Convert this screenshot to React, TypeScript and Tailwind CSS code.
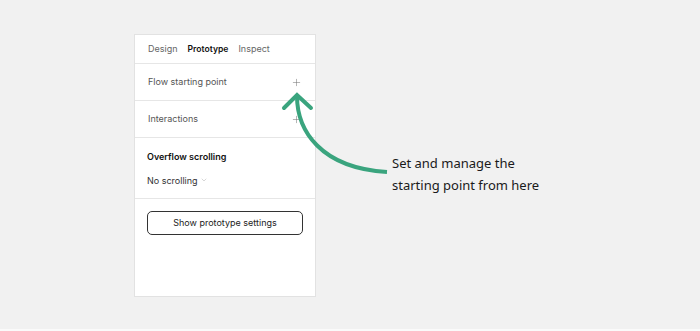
import { Plus, ChevronDown } from 'lucide-react';

const font = { fontFamily: 'Inter, "Noto Sans", sans-serif' };

function Row({ label }: { label: string }) {
  return (
    <div className="flex h-[37px] items-center justify-between border-b border-[#e6e6e6] pl-[13px] pr-[13px]">
      <span className="text-[9px] text-[#555]">{label}</span>
      <Plus size={11} strokeWidth={1.2} className="text-[#777]" />
    </div>
  );
}

export default function App() {
  return (
    <div className="relative h-[331px] w-[700px] overflow-hidden border-b-2 border-[#fafafa] bg-[#f1f1f1]">
      <div className="flex items-start pl-[134px] pt-[34px]">
        <div
          className="flex h-[263px] w-[182px] flex-col border border-[#e2e2e2] bg-white"
          style={font}
        >
          <div className="flex h-[29px] items-center gap-[10px] border-b border-[#e6e6e6] pl-[13px] text-[9px]">
            <span className="text-[#666]">Design</span>
            <span className="text-[8.6px] font-semibold text-[#111]">Prototype</span>
            <span className="text-[#666]">Inspect</span>
          </div>
          <Row label="Flow starting point" />
          <Row label="Interactions" />
          <div className="flex h-[61px] flex-col border-b border-[#e6e6e6] pl-[12px] pt-[12px]">
            <span className="text-[9px] font-semibold text-[#111]">Overflow scrolling</span>
            <div className="mt-[10px] flex items-center gap-[2px] text-[9px] text-[#333]">
              <span>No scrolling</span>
              <ChevronDown size={8} strokeWidth={1.2} className="text-[#999]" />
            </div>
          </div>
          <div className="px-[12px] pt-[12px]">
            <button className="flex h-[24px] w-full items-center justify-center rounded-[5px] border border-[#333] text-[9px] text-[#222]">
              Show prototype settings
            </button>
          </div>
        </div>
        <div
          className="ml-[76px] mt-[118px] text-[13px] leading-[22px] text-[#1a1a1a]"
          style={{ fontFamily: '"Noto Sans", sans-serif' }}
        >
          <p>Set and manage the</p>
          <p>starting point from here</p>
        </div>
      </div>
      <svg className="pointer-events-none absolute left-0 top-0" width="700" height="331" fill="none">
        <path
          d="M297 96 C297 130 320 168 387 172"
          stroke="#3aa47e"
          strokeWidth="4"
          strokeLinecap="butt"
        />
        <path
          d="M284 108 L297 95 L311 108"
          stroke="#3aa47e"
          strokeWidth="4"
          strokeLinecap="round"
          strokeLinejoin="miter"
        />
      </svg>
    </div>
  );
}
